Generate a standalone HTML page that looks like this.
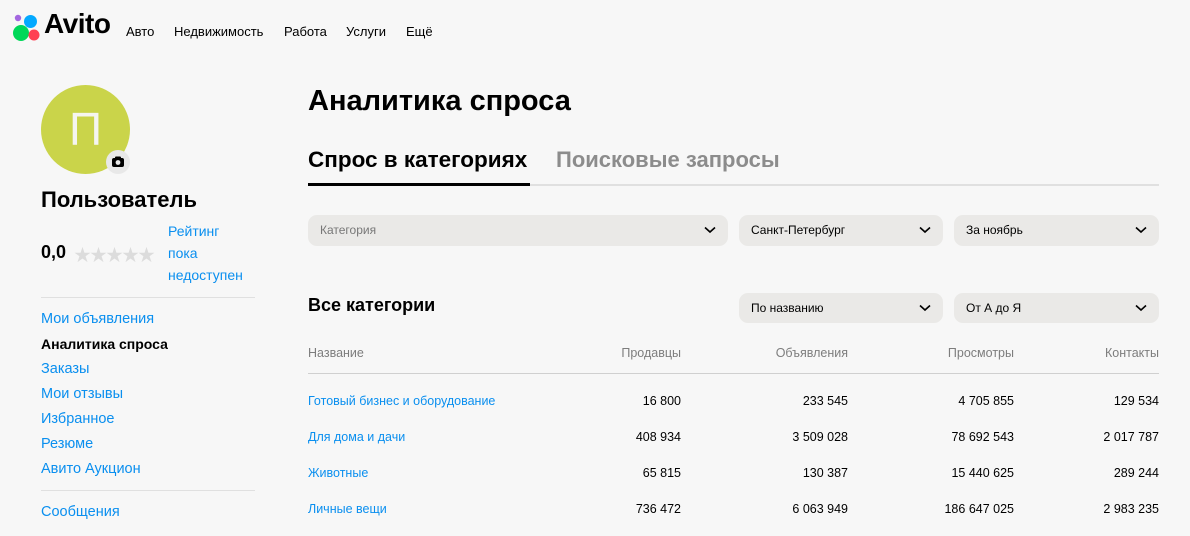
<!DOCTYPE html>
<html><head><meta charset="utf-8"><style>
*{box-sizing:border-box;margin:0;padding:0}
body{width:1190px;height:536px;overflow:hidden;background:#f7f7f7;font-family:"Liberation Sans","Noto Sans CJK SC",sans-serif;color:#000;position:relative}
.a{position:absolute;white-space:nowrap}
.nav{font-size:13px;top:24px}
.blue{color:#0a8fef}
.side{font-size:14.5px;left:41px}
.sel{position:absolute;background:#eae9e7;border-radius:9px;height:31px;font-size:12px;color:#000;padding:8px 12px}
.sel svg{position:absolute;right:12px;top:11px}
.th{font-size:12.5px;color:#7d7d7d;top:346px}
.td{font-size:12.5px}
.r{text-align:right}
</style></head><body>
<svg class="a" style="left:13px;top:14px" width="30" height="27"><circle cx="5" cy="4" r="3.2" fill="#a367e0"/><circle cx="17.5" cy="7.5" r="6.5" fill="#04a9ff"/><circle cx="8" cy="19" r="8" fill="#00d859"/><circle cx="21" cy="21" r="5.5" fill="#ff4053"/></svg>
<div class="a" style="left:44px;top:8px;font-size:28px;font-weight:bold;letter-spacing:-0.5px">Avito</div>
<div class="a nav" style="left:126px">Авто</div>
<div class="a nav" style="left:174px">Недвижимость</div>
<div class="a nav" style="left:284px">Работа</div>
<div class="a nav" style="left:346px">Услуги</div>
<div class="a nav" style="left:406px">Ещё</div>

<div class="a" style="left:41px;top:85px;width:89px;height:89px;border-radius:50%;background:#cad44a;color:#f5f5f0;font-size:46px;text-align:center;line-height:89px">П</div>
<div class="a" style="left:106px;top:150px;width:24px;height:24px;border-radius:50%;background:#e8e8e8"><svg width="24" height="24"><rect x="6" y="8" width="12" height="9" rx="2" fill="#000"/><rect x="9" y="6.5" width="6" height="3" rx="1" fill="#000"/><circle cx="12" cy="12.5" r="2.4" fill="#e8e8e8"/></svg></div>
<div class="a" style="left:41px;top:187px;font-size:22px;font-weight:bold">Пользователь</div>
<div class="a" style="left:41px;top:242px;font-size:18px;font-weight:bold">0,0</div>
<div class="a" style="left:74px;top:241px;font-size:17px;color:#dcdcdc;letter-spacing:-1px">★★★★★</div>
<div class="a blue" style="left:168px;top:220px;font-size:14px;line-height:22px;white-space:normal">Рейтинг<br>пока<br>недоступен</div>
<div class="a" style="left:41px;top:297px;width:214px;height:1px;background:#e0e0e0"></div>
<div class="a side blue" style="top:311px">Мои объявления</div>
<div class="a side" style="top:336px;font-weight:bold;font-size:14px">Аналитика спроса</div>
<div class="a side blue" style="top:361px">Заказы</div>
<div class="a side blue" style="top:386px">Мои отзывы</div>
<div class="a side blue" style="top:411px">Избранное</div>
<div class="a side blue" style="top:436px">Резюме</div>
<div class="a side blue" style="top:461px">Авито Аукцион</div>
<div class="a" style="left:41px;top:490px;width:214px;height:1px;background:#e0e0e0"></div>
<div class="a side blue" style="top:504px">Сообщения</div>

<div class="a" style="left:308px;top:85px;font-size:29px;font-weight:bold">Аналитика спроса</div>
<div class="a" style="left:308px;top:147px;font-size:22.5px;font-weight:bold">Спрос в категориях</div>
<div class="a" style="left:556px;top:147px;font-size:22px;font-weight:bold;color:#8c8c8c">Поисковые запросы</div>
<div class="a" style="left:308px;top:184px;width:851px;height:2px;background:#e0e0e0"></div>
<div class="a" style="left:308px;top:183px;width:222px;height:3px;background:#000"></div>

<div class="sel" style="left:308px;top:215px;width:420px;color:#777">Категория<svg width="12" height="8"><path d="M1 1.5l5 4.5 5-4.5" stroke="#000" stroke-width="1.6" fill="none"/></svg></div>
<div class="sel" style="left:739px;top:215px;width:204px">Санкт-Петербург<svg width="12" height="8"><path d="M1 1.5l5 4.5 5-4.5" stroke="#000" stroke-width="1.6" fill="none"/></svg></div>
<div class="sel" style="left:954px;top:215px;width:205px">За ноябрь<svg width="12" height="8"><path d="M1 1.5l5 4.5 5-4.5" stroke="#000" stroke-width="1.6" fill="none"/></svg></div>

<div class="a" style="left:308px;top:295px;font-size:18px;font-weight:bold">Все категории</div>
<div class="sel" style="left:739px;top:293px;width:204px;height:30px">По названию<svg width="12" height="8"><path d="M1 1.5l5 4.5 5-4.5" stroke="#000" stroke-width="1.6" fill="none"/></svg></div>
<div class="sel" style="left:954px;top:293px;width:205px;height:30px">От А до Я<svg width="12" height="8"><path d="M1 1.5l5 4.5 5-4.5" stroke="#000" stroke-width="1.6" fill="none"/></svg></div>

<div class="a th" style="left:308px">Название</div>
<div class="a th r" style="right:509px">Продавцы</div>
<div class="a th r" style="right:342px">Объявления</div>
<div class="a th r" style="right:176px">Просмотры</div>
<div class="a th r" style="right:31px">Контакты</div>
<div class="a" style="left:308px;top:373px;width:851px;height:1px;background:#d0d0d0"></div>

<div class="a td blue" style="left:308px;top:394px">Готовый бизнес и оборудование</div>
<div class="a td r" style="right:509px;top:394px">16 800</div>
<div class="a td r" style="right:342px;top:394px">233 545</div>
<div class="a td r" style="right:176px;top:394px">4 705 855</div>
<div class="a td r" style="right:31px;top:394px">129 534</div>

<div class="a td blue" style="left:308px;top:430px">Для дома и дачи</div>
<div class="a td r" style="right:509px;top:430px">408 934</div>
<div class="a td r" style="right:342px;top:430px">3 509 028</div>
<div class="a td r" style="right:176px;top:430px">78 692 543</div>
<div class="a td r" style="right:31px;top:430px">2 017 787</div>

<div class="a td blue" style="left:308px;top:466px">Животные</div>
<div class="a td r" style="right:509px;top:466px">65 815</div>
<div class="a td r" style="right:342px;top:466px">130 387</div>
<div class="a td r" style="right:176px;top:466px">15 440 625</div>
<div class="a td r" style="right:31px;top:466px">289 244</div>

<div class="a td blue" style="left:308px;top:502px">Личные вещи</div>
<div class="a td r" style="right:509px;top:502px">736 472</div>
<div class="a td r" style="right:342px;top:502px">6 063 949</div>
<div class="a td r" style="right:176px;top:502px">186 647 025</div>
<div class="a td r" style="right:31px;top:502px">2 983 235</div>
</body></html>
